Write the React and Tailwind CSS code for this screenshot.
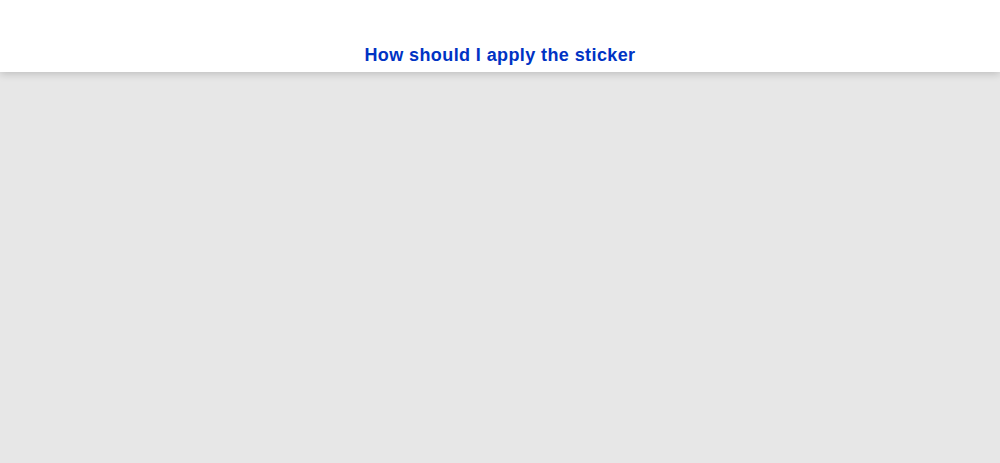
export default function App() {
  return (
    <div className="min-h-[463px] bg-[#e7e7e7] font-['Liberation_Sans',Arial,sans-serif]">
      <header className="relative z-10 h-[72px] bg-white flex items-end justify-center pb-[5px] shadow-[0_2px_8px_rgba(0,0,0,0.18)]">
        <h1 className="text-[18px] font-bold tracking-[0.4px] text-[#0033c4] leading-6">
          How should I apply the sticker
        </h1>
      </header>
    </div>
  );
}
